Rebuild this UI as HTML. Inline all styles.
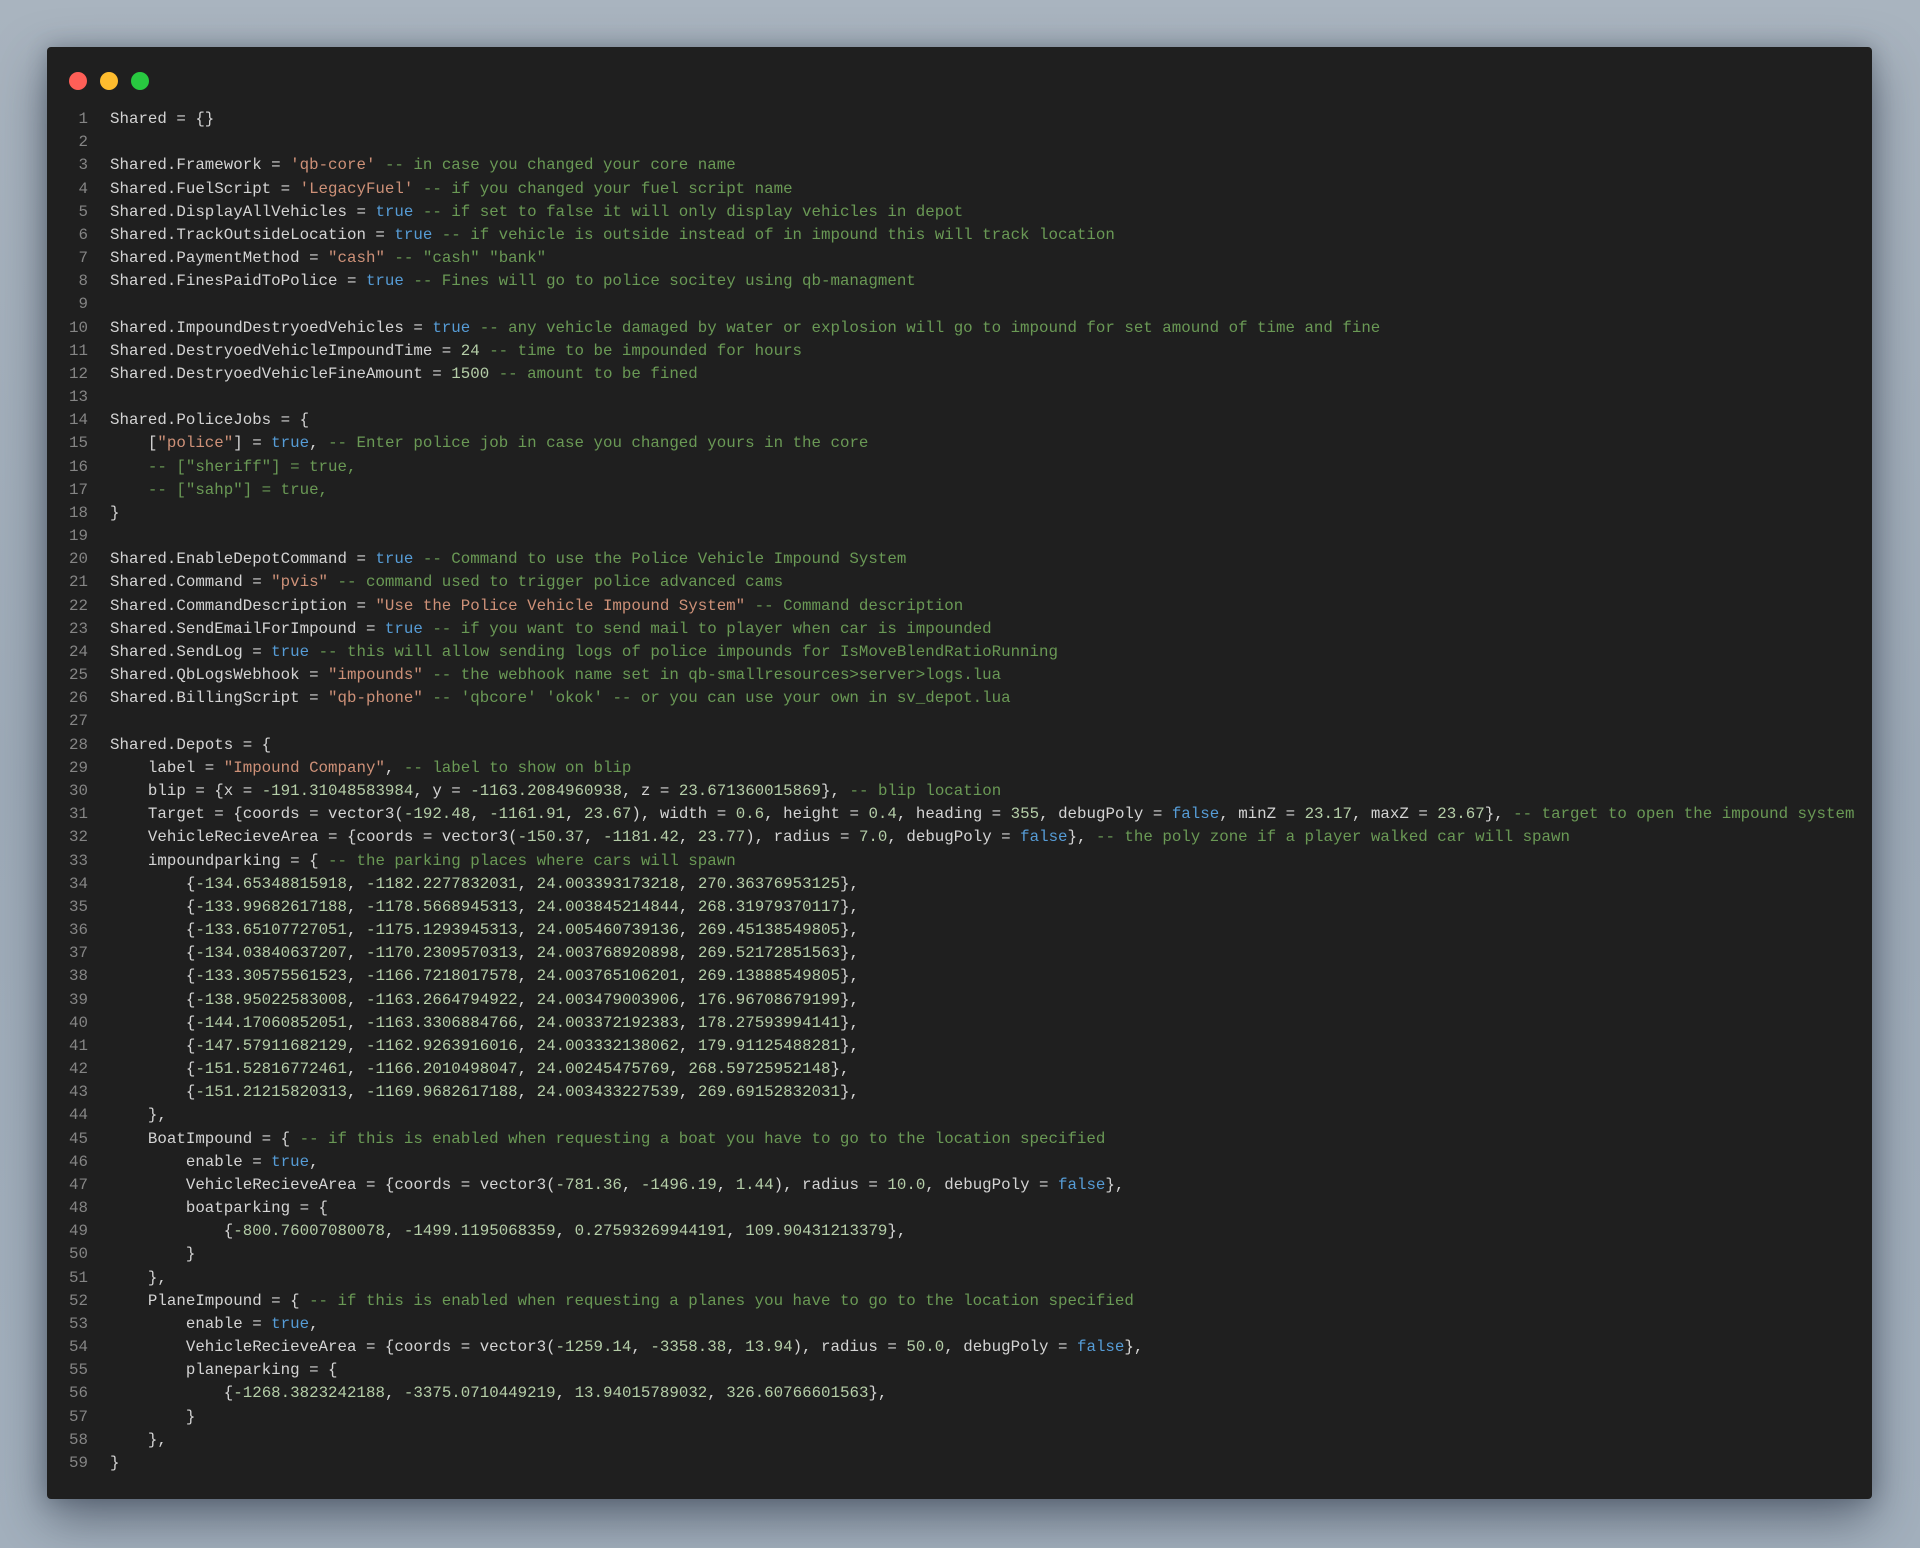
<!DOCTYPE html>
<html><head><meta charset="utf-8"><style>
html,body{margin:0;padding:0;}
body{width:1920px;height:1548px;background:linear-gradient(180deg,#a9b4bf 0%,#9eabb8 50%,#a3b0bd 100%);position:relative;overflow:hidden;font-family:"Liberation Mono",monospace;}
.win{position:absolute;left:47px;top:47px;width:1825px;height:1452px;background:#1f1f1f;border-radius:4px;box-shadow:0 20px 50px rgba(40,50,65,.55),0 0 20px rgba(40,50,65,.3);}
.dot{position:absolute;top:72px;width:18px;height:18px;border-radius:50%;}
.code{position:absolute;left:0;top:108px;font-size:15.8px;color:#d4d4d4;}
.l{height:23.18px;line-height:23.18px;white-space:pre;position:relative;}
.n{position:absolute;left:0;width:88px;text-align:right;color:#858585;}
.t{position:absolute;left:110px;}
.s{color:#ce9178}.k{color:#569cd6}.c{color:#6a9955}.m{color:#b5cea8}
</style></head><body>
<div class="win"></div>
<div class="dot" style="left:69px;background:#fe5f57"></div>
<div class="dot" style="left:100px;background:#febc2e"></div>
<div class="dot" style="left:131px;background:#28c840"></div>
<div class="code">
<div class="l"><span class="n">1</span><span class="t">Shared = {}</span></div>
<div class="l"><span class="n">2</span><span class="t"></span></div>
<div class="l"><span class="n">3</span><span class="t">Shared.Framework = <span class="s">'qb-core'</span> <span class="c">-- in case you changed your core name</span></span></div>
<div class="l"><span class="n">4</span><span class="t">Shared.FuelScript = <span class="s">'LegacyFuel'</span> <span class="c">-- if you changed your fuel script name</span></span></div>
<div class="l"><span class="n">5</span><span class="t">Shared.DisplayAllVehicles = <span class="k">true</span> <span class="c">-- if set to false it will only display vehicles in depot</span></span></div>
<div class="l"><span class="n">6</span><span class="t">Shared.TrackOutsideLocation = <span class="k">true</span> <span class="c">-- if vehicle is outside instead of in impound this will track location</span></span></div>
<div class="l"><span class="n">7</span><span class="t">Shared.PaymentMethod = <span class="s">"cash"</span> <span class="c">-- "cash" "bank"</span></span></div>
<div class="l"><span class="n">8</span><span class="t">Shared.FinesPaidToPolice = <span class="k">true</span> <span class="c">-- Fines will go to police socitey using qb-managment</span></span></div>
<div class="l"><span class="n">9</span><span class="t"></span></div>
<div class="l"><span class="n">10</span><span class="t">Shared.ImpoundDestryoedVehicles = <span class="k">true</span> <span class="c">-- any vehicle damaged by water or explosion will go to impound for set amound of time and fine</span></span></div>
<div class="l"><span class="n">11</span><span class="t">Shared.DestryoedVehicleImpoundTime = <span class="m">24</span> <span class="c">-- time to be impounded for hours</span></span></div>
<div class="l"><span class="n">12</span><span class="t">Shared.DestryoedVehicleFineAmount = <span class="m">1500</span> <span class="c">-- amount to be fined</span></span></div>
<div class="l"><span class="n">13</span><span class="t"></span></div>
<div class="l"><span class="n">14</span><span class="t">Shared.PoliceJobs = {</span></div>
<div class="l"><span class="n">15</span><span class="t">    [<span class="s">"police"</span>] = <span class="k">true</span>, <span class="c">-- Enter police job in case you changed yours in the core</span></span></div>
<div class="l"><span class="n">16</span><span class="t"><span class="c">    -- ["sheriff"] = true,</span></span></div>
<div class="l"><span class="n">17</span><span class="t"><span class="c">    -- ["sahp"] = true,</span></span></div>
<div class="l"><span class="n">18</span><span class="t">}</span></div>
<div class="l"><span class="n">19</span><span class="t"></span></div>
<div class="l"><span class="n">20</span><span class="t">Shared.EnableDepotCommand = <span class="k">true</span> <span class="c">-- Command to use the Police Vehicle Impound System</span></span></div>
<div class="l"><span class="n">21</span><span class="t">Shared.Command = <span class="s">"pvis"</span> <span class="c">-- command used to trigger police advanced cams</span></span></div>
<div class="l"><span class="n">22</span><span class="t">Shared.CommandDescription = <span class="s">"Use the Police Vehicle Impound System"</span> <span class="c">-- Command description</span></span></div>
<div class="l"><span class="n">23</span><span class="t">Shared.SendEmailForImpound = <span class="k">true</span> <span class="c">-- if you want to send mail to player when car is impounded</span></span></div>
<div class="l"><span class="n">24</span><span class="t">Shared.SendLog = <span class="k">true</span> <span class="c">-- this will allow sending logs of police impounds for IsMoveBlendRatioRunning</span></span></div>
<div class="l"><span class="n">25</span><span class="t">Shared.QbLogsWebhook = <span class="s">"impounds"</span> <span class="c">-- the webhook name set in qb-smallresources&gt;server&gt;logs.lua</span></span></div>
<div class="l"><span class="n">26</span><span class="t">Shared.BillingScript = <span class="s">"qb-phone"</span> <span class="c">-- 'qbcore' 'okok' -- or you can use your own in sv_depot.lua</span></span></div>
<div class="l"><span class="n">27</span><span class="t"></span></div>
<div class="l"><span class="n">28</span><span class="t">Shared.Depots = {</span></div>
<div class="l"><span class="n">29</span><span class="t">    label = <span class="s">"Impound Company"</span>, <span class="c">-- label to show on blip</span></span></div>
<div class="l"><span class="n">30</span><span class="t">    blip = {x = <span class="m">-191.31048583984</span>, y = <span class="m">-1163.2084960938</span>, z = <span class="m">23.671360015869</span>}, <span class="c">-- blip location</span></span></div>
<div class="l"><span class="n">31</span><span class="t">    Target = {coords = vector3(<span class="m">-192.48</span>, <span class="m">-1161.91</span>, <span class="m">23.67</span>), width = <span class="m">0.6</span>, height = <span class="m">0.4</span>, heading = <span class="m">355</span>, debugPoly = <span class="k">false</span>, minZ = <span class="m">23.17</span>, maxZ = <span class="m">23.67</span>}, <span class="c">-- target to open the impound system</span></span></div>
<div class="l"><span class="n">32</span><span class="t">    VehicleRecieveArea = {coords = vector3(<span class="m">-150.37</span>, <span class="m">-1181.42</span>, <span class="m">23.77</span>), radius = <span class="m">7.0</span>, debugPoly = <span class="k">false</span>}, <span class="c">-- the poly zone if a player walked car will spawn</span></span></div>
<div class="l"><span class="n">33</span><span class="t">    impoundparking = { <span class="c">-- the parking places where cars will spawn</span></span></div>
<div class="l"><span class="n">34</span><span class="t">        {<span class="m">-134.65348815918</span>, <span class="m">-1182.2277832031</span>, <span class="m">24.003393173218</span>, <span class="m">270.36376953125</span>},</span></div>
<div class="l"><span class="n">35</span><span class="t">        {<span class="m">-133.99682617188</span>, <span class="m">-1178.5668945313</span>, <span class="m">24.003845214844</span>, <span class="m">268.31979370117</span>},</span></div>
<div class="l"><span class="n">36</span><span class="t">        {<span class="m">-133.65107727051</span>, <span class="m">-1175.1293945313</span>, <span class="m">24.005460739136</span>, <span class="m">269.45138549805</span>},</span></div>
<div class="l"><span class="n">37</span><span class="t">        {<span class="m">-134.03840637207</span>, <span class="m">-1170.2309570313</span>, <span class="m">24.003768920898</span>, <span class="m">269.52172851563</span>},</span></div>
<div class="l"><span class="n">38</span><span class="t">        {<span class="m">-133.30575561523</span>, <span class="m">-1166.7218017578</span>, <span class="m">24.003765106201</span>, <span class="m">269.13888549805</span>},</span></div>
<div class="l"><span class="n">39</span><span class="t">        {<span class="m">-138.95022583008</span>, <span class="m">-1163.2664794922</span>, <span class="m">24.003479003906</span>, <span class="m">176.96708679199</span>},</span></div>
<div class="l"><span class="n">40</span><span class="t">        {<span class="m">-144.17060852051</span>, <span class="m">-1163.3306884766</span>, <span class="m">24.003372192383</span>, <span class="m">178.27593994141</span>},</span></div>
<div class="l"><span class="n">41</span><span class="t">        {<span class="m">-147.57911682129</span>, <span class="m">-1162.9263916016</span>, <span class="m">24.003332138062</span>, <span class="m">179.91125488281</span>},</span></div>
<div class="l"><span class="n">42</span><span class="t">        {<span class="m">-151.52816772461</span>, <span class="m">-1166.2010498047</span>, <span class="m">24.00245475769</span>, <span class="m">268.59725952148</span>},</span></div>
<div class="l"><span class="n">43</span><span class="t">        {<span class="m">-151.21215820313</span>, <span class="m">-1169.9682617188</span>, <span class="m">24.003433227539</span>, <span class="m">269.69152832031</span>},</span></div>
<div class="l"><span class="n">44</span><span class="t">    },</span></div>
<div class="l"><span class="n">45</span><span class="t">    BoatImpound = { <span class="c">-- if this is enabled when requesting a boat you have to go to the location specified</span></span></div>
<div class="l"><span class="n">46</span><span class="t">        enable = <span class="k">true</span>,</span></div>
<div class="l"><span class="n">47</span><span class="t">        VehicleRecieveArea = {coords = vector3(<span class="m">-781.36</span>, <span class="m">-1496.19</span>, <span class="m">1.44</span>), radius = <span class="m">10.0</span>, debugPoly = <span class="k">false</span>},</span></div>
<div class="l"><span class="n">48</span><span class="t">        boatparking = {</span></div>
<div class="l"><span class="n">49</span><span class="t">            {<span class="m">-800.76007080078</span>, <span class="m">-1499.1195068359</span>, <span class="m">0.27593269944191</span>, <span class="m">109.90431213379</span>},</span></div>
<div class="l"><span class="n">50</span><span class="t">        }</span></div>
<div class="l"><span class="n">51</span><span class="t">    },</span></div>
<div class="l"><span class="n">52</span><span class="t">    PlaneImpound = { <span class="c">-- if this is enabled when requesting a planes you have to go to the location specified</span></span></div>
<div class="l"><span class="n">53</span><span class="t">        enable = <span class="k">true</span>,</span></div>
<div class="l"><span class="n">54</span><span class="t">        VehicleRecieveArea = {coords = vector3(<span class="m">-1259.14</span>, <span class="m">-3358.38</span>, <span class="m">13.94</span>), radius = <span class="m">50.0</span>, debugPoly = <span class="k">false</span>},</span></div>
<div class="l"><span class="n">55</span><span class="t">        planeparking = {</span></div>
<div class="l"><span class="n">56</span><span class="t">            {<span class="m">-1268.3823242188</span>, <span class="m">-3375.0710449219</span>, <span class="m">13.94015789032</span>, <span class="m">326.60766601563</span>},</span></div>
<div class="l"><span class="n">57</span><span class="t">        }</span></div>
<div class="l"><span class="n">58</span><span class="t">    },</span></div>
<div class="l"><span class="n">59</span><span class="t">}</span></div>
</div>
</body></html>
